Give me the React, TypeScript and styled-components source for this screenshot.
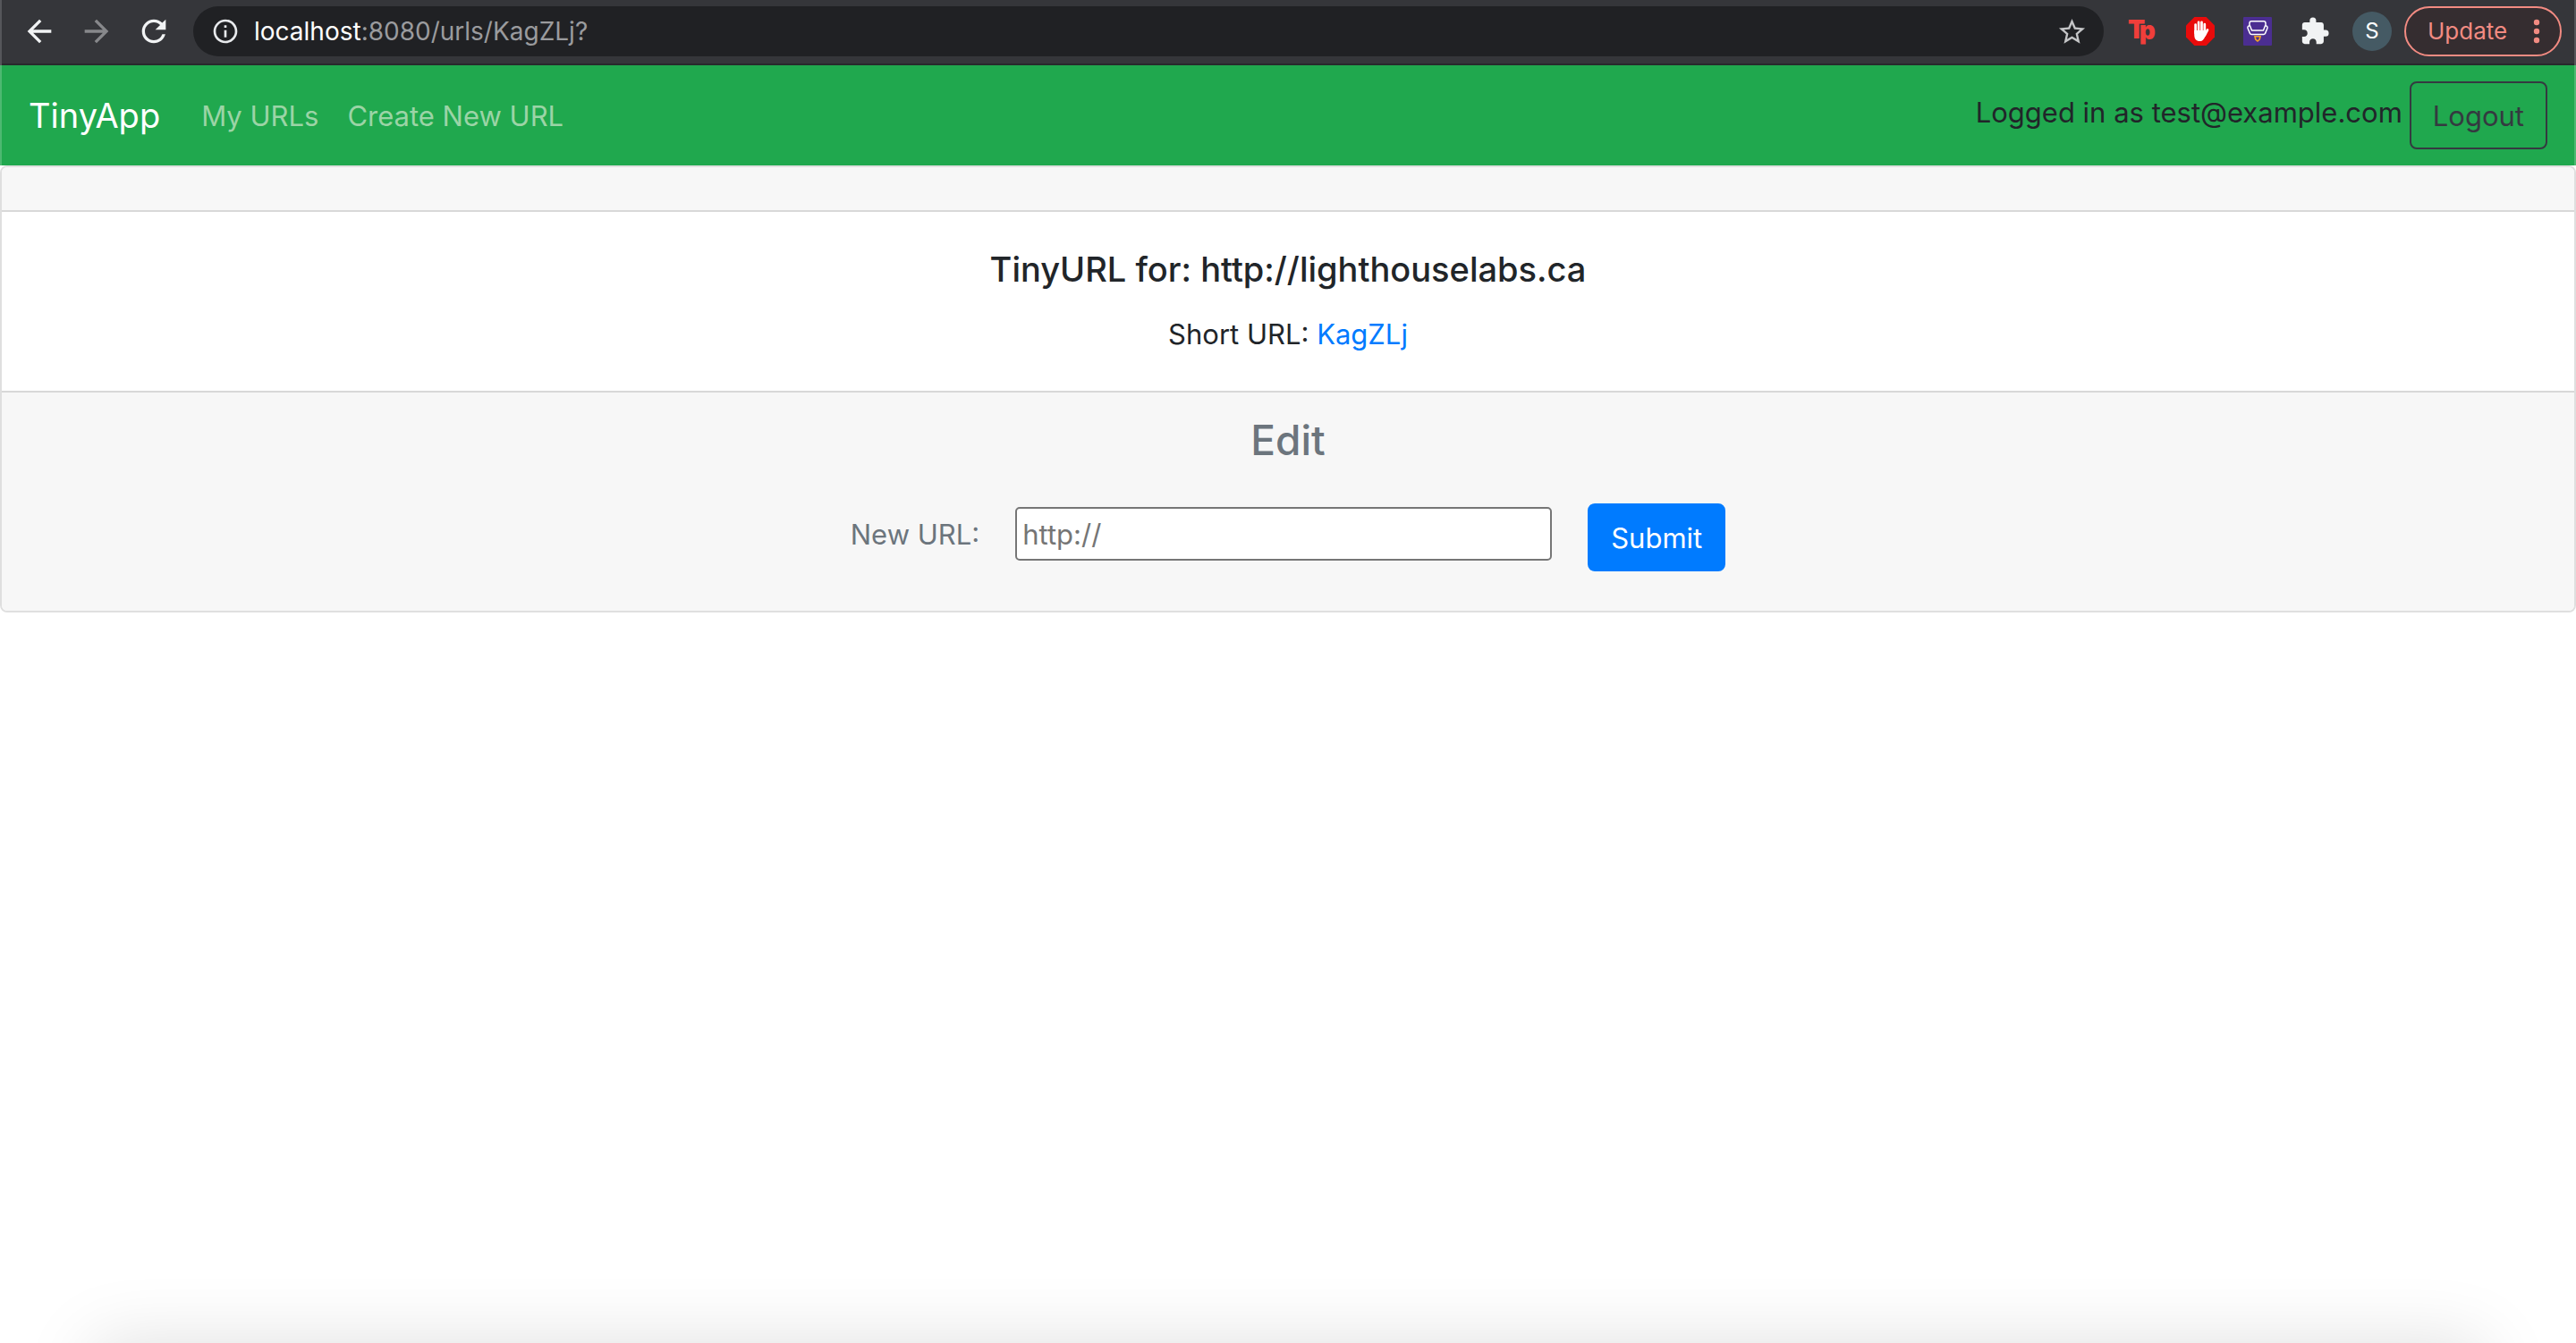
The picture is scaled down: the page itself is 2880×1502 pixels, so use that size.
import React from "react";
import styled, { createGlobalStyle } from "styled-components";
import {
  MdArrowBack,
  MdArrowForward,
  MdExtension,
  MdInfoOutline,
  MdRefresh,
  MdStarBorder,
} from "react-icons/md";

const GlobalStyle = createGlobalStyle`
  *, *::before, *::after { box-sizing: border-box; }
  body {
    margin: 0;
    background: #fff;
    color: #212529;
    font-family: Inter, "Liberation Sans", sans-serif;
    font-size: 31px;
    line-height: 50px;
  }
  button, input { font: inherit; }
  a { text-decoration: none; }
`;

const Page = styled.div`
  min-height: 100vh;
  overflow: hidden;
`;

/* ---------- browser toolbar ---------- */

const Toolbar = styled.header`
  display: flex;
  align-items: center;
  height: 73px;
  padding: 0 14px 3px 22px;
  background: #35363a;
  border: solid #55565a;
  border-width: 0 2px;
  box-shadow: inset 0 -2px 0 #28292c;
`;

const ToolButtons = styled.div`
  display: flex;
  align-items: center;
  gap: 24px;
  margin-right: 24px;
`;

const ToolButton = styled.button<{ $color?: string }>`
  display: flex;
  align-items: center;
  justify-content: center;
  width: 40px;
  height: 40px;
  padding: 0;
  border: 0;
  background: none;
  color: ${(p) => p.$color ?? "#f1f3f4"};
`;

const AddressBar = styled.div`
  display: flex;
  flex: 1;
  align-items: center;
  height: 56px;
  padding: 0 16px 0 20px;
  border-radius: 28px;
  background: #202124;
  color: #e8eaed;
`;

const Address = styled.div`
  flex: 1;
  padding-left: 16px;
  color: #9a9b9e;
  font-size: 28px;
  line-height: 56px;
`;

const Host = styled.span`
  color: #fff;
`;

const Extensions = styled.div`
  display: flex;
  align-items: center;
  gap: 24px;
  padding: 0 22px 0 24px;
`;

const Avatar = styled.button`
  width: 44px;
  height: 44px;
  margin-right: 14px;
  padding: 0;
  border: 0;
  border-radius: 50%;
  background: #455a64;
  color: #fff;
  font-size: 24px;
  line-height: 44px;
`;

const Update = styled.button`
  display: flex;
  align-items: center;
  justify-content: space-between;
  width: 176px;
  height: 56px;
  padding: 0 22px 0 24px;
  border: 2px solid #f28b82;
  border-radius: 28px;
  background: #352d30;
  color: #f28b82;
  font-size: 26px;
`;

/* ---------- site navigation ---------- */

const Navbar = styled.nav`
  display: flex;
  align-items: center;
  height: 112px;
  padding: 0 30px;
  background: #20a84e;
  border: solid #4db971;
  border-width: 0 2px;
`;

const Brand = styled.a`
  margin-right: 46px;
  color: #fff;
  font-size: 38px;
`;

const NavLinks = styled.div`
  display: flex;
  flex: 1;
  gap: 32px;
  padding-top: 2px;
`;

const NavLink = styled.a`
  color: #9bd4a6;
`;

const Session = styled.form`
  display: flex;
  align-items: flex-start;
  gap: 8px;
`;

const SessionText = styled.span`
  line-height: 70px;
`;

const Button = styled.button<{ $primary?: boolean }>`
  height: 76px;
  padding: 2px 24px 0;
  border: 2px solid ${(p) => (p.$primary ? "#007bff" : "#343a40")};
  border-radius: 8px;
  background: ${(p) => (p.$primary ? "#007bff" : "transparent")};
  color: ${(p) => (p.$primary ? "#fff" : "#343a40")};
`;

/* ---------- card ---------- */

const Card = styled.main`
  border: 2px solid #dfdfdf;
  border-radius: 8px;
  text-align: center;
  overflow: hidden;
`;

const CardHeader = styled.div`
  height: 50px;
  background: #f7f7f7;
  border-bottom: 2px solid #d8d8d8;
`;

const CardBody = styled.section`
  padding: 40px 40px 38px;
`;

const Title = styled.h5`
  margin: 0 0 24px;
  font-size: 38px;
  font-weight: 500;
  line-height: 48px;
`;

const ShortUrl = styled.p`
  margin: 0;
`;

const ShortLink = styled.a`
  color: #007bff;
`;

const CardFooter = styled.section`
  padding: 24px 40px 44px;
  background: #f7f7f7;
  border-top: 2px solid #d8d8d8;
  color: #6c757d;
`;

const EditTitle = styled.h3`
  margin: 0 0 42px;
  font-size: 46px;
  font-weight: 500;
  line-height: 58px;
`;

const EditForm = styled.form`
  display: flex;
  align-items: flex-start;
  justify-content: center;
  gap: 40px;
`;

const Field = styled.div`
  display: flex;
  align-items: center;
  gap: 40px;
  padding-top: 4px;
`;

const FieldLabel = styled.label`
  padding-top: 2px;
`;

const UrlInput = styled.input`
  width: 600px;
  height: 60px;
  padding: 0 6px;
  border: 2px solid #767676;
  border-radius: 5px;
  background: #fff;
  &::placeholder { color: #757575; opacity: 1; }
`;

/* soft shade rising from the bottom edge of the window */
const BottomShade = styled.div`
  position: fixed;
  top: 100vh;
  left: 104px;
  right: 104px;
  height: 200px;
  box-shadow: 0 0 80px rgba(0, 0, 0, 0.13);
  pointer-events: none;
`;

const TpLogo = () => (
  <svg width="40" height="40" viewBox="0 0 40 40" fill="#f03e3a" fontFamily="Inter, sans-serif" fontWeight="900">
    <text x="3" y="28" fontSize="28">T<tspan dx="-5" dy="1">p</tspan></text>
  </svg>
);

const HandLogo = () => (
  <svg width="32" height="32" viewBox="0 0 32 32">
    <path d="M9.4 0h13.2L32 9.4v13.2L22.6 32H9.4L0 22.6V9.4z" fill="#e90b0b" />
    <g stroke="#fff" strokeWidth="2.7" strokeLinecap="round" fill="none">
      <path d="M10.600 8.500V18M14.100 5.800V17M17.500 5.800V17M20.800 8.200V18" />
      <path d="M20.800 20.500l3.200-6" />
    </g>
    <path d="M9.250 15h12.900l.6 4-2.200 4.400c-1.200 2.400-3 3.600-5.200 3.600-4 0-6.100-2.600-6.100-7z" fill="#fff" />
  </svg>
);

const CouchLogo = () => (
  <svg width="32" height="32" viewBox="0 0 32 32">
    <rect width="32" height="32" rx="1" fill="#4b2e91" />
    <g fill="none" stroke="#fff" strokeWidth="1.5" strokeLinejoin="round">
      <path d="M7 10V7q0-2.200 2.200-2.200h13.600Q25 4.800 25 7v3" />
      <path d="M7.500 9.800c-3 0-2.800 2-2.200 3.400l2.200 5.200q.5 1 1.700 1h13.600q1.200 0 1.700-1l2.200-5.200c.6-1.400.8-3.400-2.200-3.400L22.500 15h-13z" />
    </g>
    <path d="M13 21.800h6l-.8 3.200-2.200 2-2.200-2z" fill="none" stroke="#f5a623" strokeWidth="1.6" />
  </svg>
);

const Dots = () => (
  <svg width="8" height="28" viewBox="0 0 8 28" fill="currentColor">
    <circle cx="4" cy="4" r="3.2" />
    <circle cx="4" cy="14" r="3.2" />
    <circle cx="4" cy="24" r="3.2" />
  </svg>
);

export default function App() {
  return (
    <Page>
      <GlobalStyle />
      <Toolbar>
        <ToolButtons>
          <ToolButton aria-label="Back"><MdArrowBack size={40} /></ToolButton>
          <ToolButton aria-label="Forward" $color="#87888b"><MdArrowForward size={40} /></ToolButton>
          <ToolButton aria-label="Reload"><MdRefresh size={40} /></ToolButton>
        </ToolButtons>
        <AddressBar>
          <MdInfoOutline size={32} />
          <Address><Host>localhost</Host>:8080/urls/KagZLj?</Address>
          <ToolButton aria-label="Bookmark" $color="#c4c5c7"><MdStarBorder size={35} /></ToolButton>
        </AddressBar>
        <Extensions>
          <ToolButton aria-label="Toolkit"><TpLogo /></ToolButton>
          <ToolButton aria-label="Blocker"><HandLogo /></ToolButton>
          <ToolButton aria-label="Couch"><CouchLogo /></ToolButton>
          <ToolButton aria-label="Extensions"><MdExtension size={34} /></ToolButton>
        </Extensions>
        <Avatar>S</Avatar>
        <Update>Update<Dots /></Update>
      </Toolbar>

      <Navbar>
        <Brand href="#">TinyApp</Brand>
        <NavLinks>
          <NavLink href="#">My URLs</NavLink>
          <NavLink href="#">Create New URL</NavLink>
        </NavLinks>
        <Session onSubmit={(e) => e.preventDefault()}>
          <SessionText>Logged in as test@example.com</SessionText>
          <Button>Logout</Button>
        </Session>
      </Navbar>

      <Card>
        <CardHeader />
        <CardBody>
          <Title>TinyURL for: http://lighthouselabs.ca</Title>
          <ShortUrl>Short URL: <ShortLink href="#">KagZLj</ShortLink></ShortUrl>
        </CardBody>
        <CardFooter>
          <EditTitle>Edit</EditTitle>
          <EditForm onSubmit={(e) => e.preventDefault()}>
            <Field>
              <FieldLabel htmlFor="new-url">New URL:</FieldLabel>
              <UrlInput id="new-url" type="text" placeholder="http://" />
            </Field>
            <Button $primary>Submit</Button>
          </EditForm>
        </CardFooter>
      </Card>
      <BottomShade />
    </Page>
  );
}
